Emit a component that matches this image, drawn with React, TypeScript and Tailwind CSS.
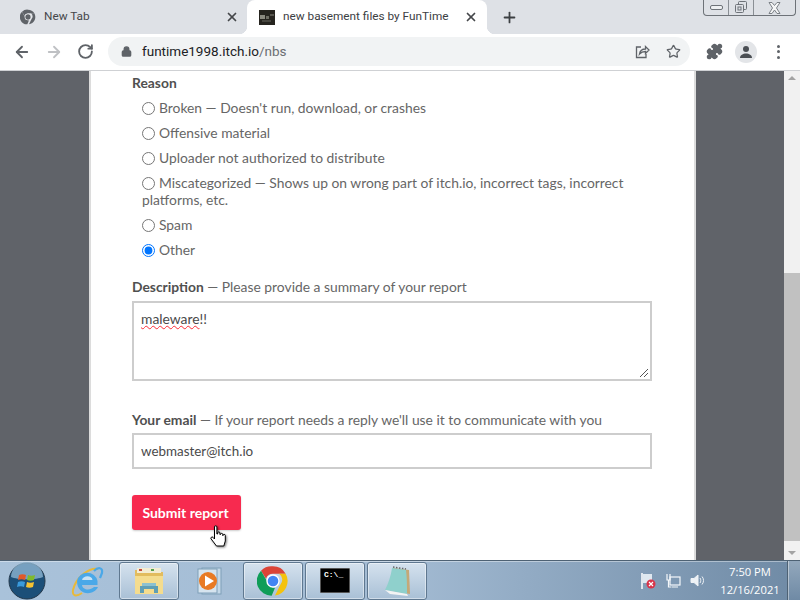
import { ArrowLeft, ArrowRight, RotateCw, Lock, Star, Plus, X, Puzzle } from "lucide-react";

function ChromeLogo({ size = 16, mono = false }: { size?: number; mono?: boolean }) {
  const red = mono ? "#5f6368" : "#db4437";
  const yellow = mono ? "#5f6368" : "#f4c20d";
  const green = mono ? "#5f6368" : "#0f9d58";
  const blue = mono ? "#5f6368" : "#4285f4";
  return (
    <svg width={size} height={size} viewBox="0 0 48 48">
      <path d="M24 2a22 22 0 0 1 19 11H24a11 11 0 0 0-10.500 7.500L6 8.500A22 22 0 0 1 24 2z" fill={red} />
      <path d="M43 13a22 22 0 0 1-16 32.800L35 29.500a11 11 0 0 0-2-16.500z" fill={yellow} />
      <path d="M6 8.500l9.500 16.500a11 11 0 0 0 11.500 9L22 46A22 22 0 0 1 6 8.500z" fill={green} />
      <circle cx="24" cy="24" r="10" fill="#fff" />
      <circle cx="24" cy="24" r="8" fill={blue} />
    </svg>
  );
}

function Favicon() {
  return (
    <svg width="16" height="15" viewBox="0 0 16 15" className="shrink-0">
      <rect width="16" height="15" fill="#26241f" />
      <rect x="1" y="5" width="5" height="4" fill="#8b8a80" />
      <rect x="7" y="6" width="3" height="3" fill="#6d6c63" />
      <rect x="11" y="4" width="4" height="2" fill="#57564e" />
      <rect x="3" y="10" width="9" height="2" fill="#47463f" />
    </svg>
  );
}

function TabClose() {
  return <X size={14} strokeWidth={3} className="shrink-0 text-[#45474a]" />;
}

function RadioRow({ label, checked }: { label: string; checked?: boolean }) {
  return (
    <label className="block pl-[10px] leading-[17px]">
      <input type="radio" name="reason" defaultChecked={checked} className="mr-[4px] align-[-2px] accent-[#0075ff]" />
      {label}
    </label>
  );
}

function TaskButton({ children }: { children: React.ReactNode }) {
  return (
    <div className="flex h-[38px] w-[60px] items-center justify-center rounded-[3px] border border-[#5f7890] bg-gradient-to-b from-[#d5e2ee] to-[#a9c0d6] shadow-[inset_0_0_0_1px_rgba(255,255,255,0.45)]">
      {children}
    </div>
  );
}

function WindowsOrb() {
  return (
    <svg width="38" height="38" viewBox="0 0 38 38">
      <circle cx="19" cy="19" r="18" fill="#1c4f78" stroke="#24384a" />
      <path d="M3 15a16 15 0 0 1 32 0c-6 3-26 3-32 0z" fill="#9cc3de" opacity="0.7" />
      <path d="M11 13c2-1 5-1 7 0l-1 5c-2-1-5-1-7 0z" fill="#e0592a" />
      <path d="M20 13c2 1 5 1 7 0l-1 5c-2 1-5 1-7 0z" fill="#7fba2a" />
      <path d="M10 20c2-1 5-1 7 0l-1 5c-2-1-5-1-7 0z" fill="#3a9bdc" />
      <path d="M19 20c2 1 5 1 7 0l-1 5c-2 1-5 1-7 0z" fill="#f6c232" />
    </svg>
  );
}

function IeIcon() {
  return (
    <svg width="34" height="34" viewBox="0 0 34 34">
      <path d="M28 5C20 3 6 13 3 26c-1 6 3 7 9 3" fill="none" stroke="#e8b93a" strokeWidth="2" />
      <path d="M7 17a10.500 10.500 0 0 1 20.500 0v4H12c.5 5 8 6 12 2h4c-4 9-21 9-21-6z" fill="#4aa8e8" />
      <path d="M12 16h10.500c-.5-5-9.500-5-10.500 0z" fill="#c9e3f5" />
      <path d="M24 7c4-4 9-4 8 2l-2 5" fill="none" stroke="#4aa8e8" strokeWidth="2.200" />
    </svg>
  );
}

function ExplorerIcon() {
  return (
    <svg width="32" height="30" viewBox="0 0 32 30">
      <path d="M2 4h10l2 2h16v20H2z" fill="#e2bc5e" />
      <rect x="4" y="2" width="24" height="5" fill="#f3ecd2" />
      <rect x="6" y="3" width="3" height="2" fill="#c94a3a" />
      <rect x="18" y="3" width="3" height="2" fill="#57a14a" />
      <path d="M2 10h28v18H2z" fill="#f4dc8e" />
      <path d="M7 27v-7h18v7h-4v-4H11v4z" fill="#5f9fb4" />
      <rect x="9" y="17" width="14" height="3" fill="#8cc1cf" />
    </svg>
  );
}

function PlayerIcon() {
  return (
    <svg width="28" height="30" viewBox="0 0 28 30">
      <rect x="8" y="2" width="19" height="26" fill="#c4d8e8" stroke="#7f9fb8" />
      <rect x="4" y="3" width="19" height="24" fill="#d6e4ef" stroke="#7f9fb8" />
      <circle cx="14" cy="15" r="9" fill="#e87a24" />
      <path d="M11 9.500l9 5.500-9 5.500z" fill="#fff" />
    </svg>
  );
}

function NotepadIcon() {
  return (
    <svg width="32" height="34" viewBox="0 0 32 34">
      <path d="M12 4l16 2 1 24-17-3z" fill="#c4a878" />
      <path d="M11 4L25 6c1 8 1 16 1 24L4 26c3-6 6-14 7-22z" fill="#8fd0cc" />
      <path d="M4 26l22 4 1 2-18-2z" fill="#f4f4f4" />
      <path d="M12 3l13 2" stroke="#666" strokeWidth="1.500" strokeDasharray="1.500 1.500" />
    </svg>
  );
}

function HandCursor() {
  return (
    <svg width="17" height="22" viewBox="0 0 17 22" className="absolute left-[78px] top-[30px] drop-shadow-[1px_1px_1px_rgba(0,0,0,0.5)]">
      <path
        d="M4.500 2a1.200 1.200 0 0 1 2.400 0v7h.8V8a1.100 1.100 0 0 1 2.200 0v1.500h.6a1.100 1.100 0 0 1 2.200 0v1h.4a1.100 1.100 0 0 1 2.200 0V16l-1.500 5H6.500L1.200 14a1.200 1.200 0 0 1 1.800-1.600l1.500 1.600z"
        fill="#fff"
        stroke="#000"
        strokeWidth="1"
      />
    </svg>
  );
}

export default function App() {
  return (
    <div className="flex h-[600px] w-[800px] flex-col overflow-hidden bg-white font-['Lato',sans-serif]">
      {/* Tab strip */}
      <div className="flex h-[34px] shrink-0 bg-[#dee1e6] font-['Roboto',sans-serif] text-[11.800px]">
        <div className="flex w-[247px] items-center pl-[20px] pr-[8px] text-[#45474a]">
          <ChromeLogo mono />
          <span className="ml-[8px] flex-1">New Tab</span>
          <TabClose />
        </div>
        <div className="relative flex w-[240px] items-center rounded-t-[8px] bg-white pl-[12px] pr-[9px] text-[#3c4043] before:absolute before:bottom-0 before:left-[-8px] before:h-[8px] before:w-[8px] before:bg-[radial-gradient(circle_at_0_0,transparent_8px,white_8.500px)] after:absolute after:bottom-0 after:right-[-8px] after:h-[8px] after:w-[8px] after:bg-[radial-gradient(circle_at_100%_0,transparent_8px,white_8.500px)]">
          <Favicon />
          <span className="ml-[8px] flex-1 truncate">new basement files by FunTime</span>
          <TabClose />
        </div>
        <div className="ml-[14px] flex items-center">
          <Plus size={17} strokeWidth={2.500} className="text-[#3c4043]" />
        </div>
        {/* Window buttons */}
        <div className="ml-auto mr-[4px] flex h-[16px] self-start rounded-b-[4px] border border-t-0 border-[#6d7278]">
          <div className="flex w-[25px] items-center justify-center border-r border-[#8a8f95]">
            <div className="h-[5px] w-[13px] rounded-[2px] border border-[#6d7278] bg-[#eef0f2]" />
          </div>
          <div className="flex w-[25px] items-center justify-center border-r border-[#8a8f95]">
            <svg width="14" height="13" viewBox="0 0 14 13" fill="none" stroke="#6d7278">
              <rect x="4.500" y="0.500" width="8" height="8" rx="1" />
              <rect x="1.500" y="3.500" width="8" height="8" rx="1" fill="#dee1e6" />
              <rect x="4" y="6" width="3" height="3" />
            </svg>
          </div>
          <div className="flex w-[41px] items-center justify-center">
            <svg width="13" height="12" viewBox="0 0 13 12" fill="#f4f5f6" stroke="#7b8086">
              <path d="M1 .5h3l2.500 3 2.500-3h3L8.500 6l3.500 5.500H9L6.500 8 4 11.500H1L4.500 6z" />
            </svg>
          </div>
        </div>
      </div>

      {/* Toolbar */}
      <div className="flex h-[37px] shrink-0 items-center border-b border-[#cfd1d4] bg-white pb-[1px] text-[#5f6368]">
        <ArrowLeft size={18} strokeWidth={2.400} className="ml-[13px]" />
        <ArrowRight size={18} strokeWidth={2.400} className="ml-[14px] text-[#bfc1c4]" />
        <RotateCw size={17} strokeWidth={2.600} className="ml-[14px]" />
        <div className="ml-[14px] flex h-[29px] w-[582px] items-center rounded-full bg-[#f1f3f4] pl-[13px] pr-[9px] font-['Roboto',sans-serif] text-[13.500px]">
          <Lock size={11} strokeWidth={3} fill="#5f6368" className="mr-[10px]" />
          <span className="flex-1 text-[#202124]">
            funtime1998.itch.io<span className="text-[#6b6e72]">/nbs</span>
          </span>
          <svg width="16" height="16" viewBox="0 0 16 16" fill="none" stroke="#5f6368" strokeWidth="1.300" className="mr-[16px]">
            <path d="M7 3H2.500v10.500H12V10" />
            <path d="M5.500 10c.5-3 3-5 6-5V2.500L15 6l-3.500 3.500V7.500c-2.500 0-4.500.8-6 2.500z" />
          </svg>
          <Star size={15} strokeWidth={2} />
        </div>
        <Puzzle size={17} fill="#5f6368" className="ml-[16px]" />
        <div className="ml-[12px] flex h-[22px] w-[22px] items-center justify-center rounded-full bg-[#e3e5e8]">
          <svg width="14" height="14" viewBox="0 0 14 14" fill="#4b4f54">
            <circle cx="7" cy="4" r="3" />
            <path d="M1 13c0-3 3-4.500 6-4.500s6 1.500 6 4.500z" />
          </svg>
        </div>
        <div className="ml-[20px] flex flex-col gap-[2.500px]">
          <span className="h-[3px] w-[3px] rounded-full bg-[#5f6368]" />
          <span className="h-[3px] w-[3px] rounded-full bg-[#5f6368]" />
          <span className="h-[3px] w-[3px] rounded-full bg-[#5f6368]" />
        </div>
      </div>

      {/* Page */}
      <div className="flex min-h-0 flex-1">
        <div className="min-w-0 flex-1 overflow-hidden bg-[#606369]">
          <div className="ml-[89px] h-full w-[607px] border-x-2 border-[#dcdcdc] bg-white pl-[41px] pt-[3px] text-[13.850px] text-[#666666]">
            <div className="w-[520px]">
              <div className="font-bold leading-[17px] text-[#505050]">Reason</div>
              <div className="mt-[8px] flex flex-col gap-[8px]">
                <RadioRow label="Broken — Doesn't run, download, or crashes" />
                <RadioRow label="Offensive material" />
                <RadioRow label="Uploader not authorized to distribute" />
                <RadioRow label="Miscategorized — Shows up on wrong part of itch.io, incorrect tags, incorrect platforms, etc." />
                <RadioRow label="Spam" />
                <RadioRow label="Other" checked />
              </div>

              <div className="mt-[20px] leading-[17px]">
                <span className="font-bold text-[#505050]">Description</span> — Please provide a summary of your report
              </div>
              <div className="relative mt-[6px] h-[80px] border-2 border-[#cdcdcd] px-[7px] py-[6px] leading-[20px] text-[#4a4a4a]">
                <span className="underline decoration-red-500 decoration-wavy decoration-1">maleware</span>!!
                <svg width="10" height="10" viewBox="0 0 10 10" stroke="#555" className="absolute bottom-[1px] right-[1px]">
                  <path d="M1 9L9 1M5 9l4-4" />
                </svg>
              </div>

              <div className="mt-[30px] leading-[17px]">
                <span className="font-bold text-[#505050]">Your email</span> — If your report needs a reply we'll use it to communicate with you
              </div>
              <input
                defaultValue="webmaster@itch.io"
                className="mt-[5px] h-[36px] w-full border-2 border-[#cdcdcd] px-[7px] pb-[1px] text-[13.400px] text-[#4a4a4a] outline-none"
              />

              <button className="relative mt-[26px] block h-[35px] w-[109px] rounded-[3px] bg-[#f72a4f] pr-[2px] text-[14px] font-bold text-white shadow-[0_1px_2px_rgba(0,0,0,0.2)]">
                Submit report
                <HandCursor />
              </button>
            </div>
          </div>
        </div>

        {/* Scrollbar */}
        <div className="flex w-[16px] shrink-0 flex-col items-center bg-[#f1f1f1]">
          <div className="mt-[5px] h-0 w-0 border-x-[4px] border-b-[4px] border-x-transparent border-b-[#a3a3a3]" />
          <div className="mt-[193px] h-[268px] w-full bg-[#c1c1c1]" />
          <div className="mt-[10px] h-0 w-0 border-x-[4px] border-t-[4px] border-x-transparent border-t-[#a3a3a3]" />
        </div>
      </div>

      {/* Taskbar */}
      <div className="flex h-[40px] shrink-0 items-center border-t border-[#4e6274] bg-gradient-to-r from-[#a9c2da] via-[#a3bbd3] to-[#6f8aa5] shadow-[inset_0_1px_0_rgba(255,255,255,0.4)]">
        <div className="ml-[8px]">
          <WindowsOrb />
        </div>
        <div className="ml-[24px]">
          <IeIcon />
        </div>
        <div className="ml-[15px]">
          <TaskButton>
            <ExplorerIcon />
          </TaskButton>
        </div>
        <div className="ml-[15px]">
          <PlayerIcon />
        </div>
        <div className="ml-[21px] flex gap-[2px]">
          <TaskButton>
            <ChromeLogo size={32} />
          </TaskButton>
          <TaskButton>
            <div className="h-[25px] w-[30px] rounded-[1px] border border-[#555] bg-black px-[3px] pt-[1px] font-['Liberation_Mono',monospace] text-[8px] font-bold leading-[10px] text-white">
              C:\_
            </div>
          </TaskButton>
          <TaskButton>
            <NotepadIcon />
          </TaskButton>
        </div>

        {/* Tray */}
        <div className="ml-[213px] flex items-center gap-[9px]">
          <svg width="16" height="18" viewBox="0 0 16 18">
            <path d="M2 1v16" stroke="#fff" strokeWidth="1.500" />
            <path d="M3 2h9v9H3z" fill="#dfe8f0" />
            <circle cx="11" cy="12" r="4.500" fill="#d8344a" />
            <path d="M9 10l4 4M13 10l-4 4" stroke="#fff" strokeWidth="1.200" />
          </svg>
          <svg width="16" height="16" viewBox="0 0 16 16" fill="none" stroke="#f4f7fa" strokeWidth="1.200">
            <rect x="5" y="4" width="10" height="8" />
            <path d="M7 14h6M2 1v6h3V1M3.500 7v7h3" />
          </svg>
          <svg width="15" height="15" viewBox="0 0 15 15" fill="none" stroke="#eef2f6">
            <path d="M1 5.500h3L8 2v11L4 9.500H1z" fill="#eef2f6" />
            <path d="M10 5c1 1.500 1 3.500 0 5M12 3.500c2 2 2 6 0 8" />
          </svg>
        </div>
        <div className="ml-[12px] w-[66px] text-center font-['Open_Sans',sans-serif] text-[11.200px] leading-[18px] text-white">
          <div>7:50 PM</div>
          <div>12/16/2021</div>
        </div>
        <div className="ml-auto h-full w-[13px] border-l border-[#4e6274] bg-gradient-to-b from-[#93a8bc] to-[#6f8aa5] shadow-[inset_1px_0_0_rgba(255,255,255,0.4)]" />
      </div>
    </div>
  );
}
